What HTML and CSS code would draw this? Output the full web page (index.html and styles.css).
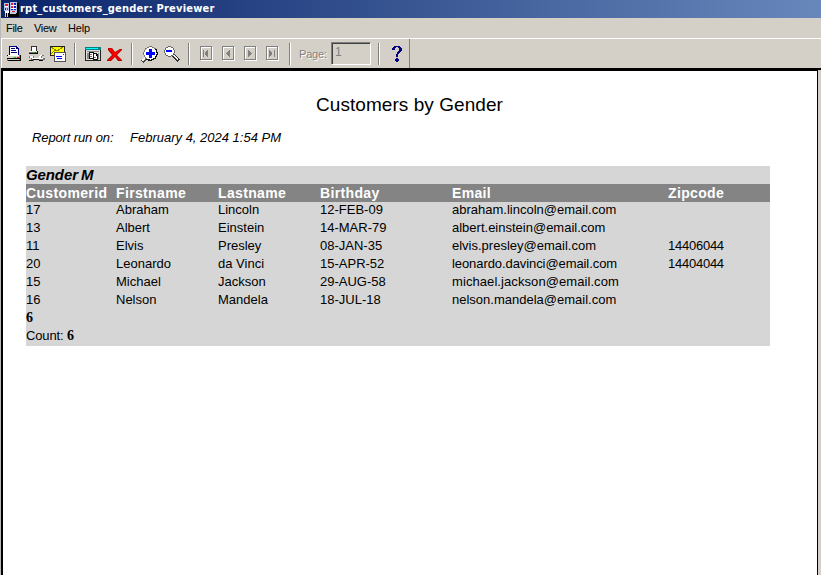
FILE: index.html
```html
<!DOCTYPE html>
<html lang="en">
<head>
<meta charset="utf-8">
<title>rpt_customers_gender: Previewer</title>
<link rel="stylesheet" href="styles.css">
</head>
<body>
<div class="window">
  <header class="titlebar">
    <svg class="app-icon" width="16" height="16" viewBox="0 0 16 16" shape-rendering="crispEdges">
      <path fill="#000" d="M1 1h15v14H3V9H1z"/>
      <path fill="#b8c4e8" d="M1 1h5v8H1zM7 0h7v11H7z"/>
      <path fill="#fff" d="M2 4h3v1H2zM8 3h5v1H8zM8 6h5v1H8zM2 9h4v2H2zM8 9h5v1H8z"/>
      <path fill="#e02030" d="M2 2h3v2H2zM8 1h2v2H8zM8 4h2v2H8zM9 9h3v1H9zM4 6h1v2H4z"/>
      <path fill="#1020c0" d="M11 1h2v2h-2zM11 4h2v2h-2zM8 7h2v1H8zM11 7h2v1h-2zM2 6h1v2H2z"/>
      <path fill="#ccc" d="M2 11h1v4H2zM4 11h1v4H4zM7 11h6v1H7z"/>
    </svg>
    <span class="title">rpt_customers_gender: Previewer</span>
  </header>
  <nav class="menu"><span class="m-file">File</span><span class="m-view">View</span><span class="m-help">Help</span></nav>
  <div class="toolbar-band">
    <div class="toolbar">
      <svg class="i-print" width="16" height="17" viewBox="0 0 16 17" shape-rendering="crispEdges">
        <path fill="#000080" d="M3 1h8v1h1v1h1v7H3z"/><path fill="#fff" d="M4 2h6v2h2v6H4z"/>
        <path fill="#000080" d="M5 3h4v1H5zM5 5h5v1H5zM5 7h6v1H5z"/>
        <path fill="#808080" d="M1 10h14v6H1z"/><path fill="#fff" d="M2 10h11v1H2z"/><path fill="#d4d0c8" d="M1 11h12v2H1z"/>
        <path fill="#000" d="M1 13h13v1H1zM2 15h13v1H2zM14 10h1v6h-1zM1 10h1v1H1z"/><path fill="#d4d0c8" d="M2 14h11v1H2z"/>
        <path fill="#0c0" d="M8 12h2v1H8z"/><path fill="#f00" d="M11 12h2v1h-2z"/>
      </svg>
      <svg class="i-setup" width="17" height="17" viewBox="0 0 17 17" shape-rendering="crispEdges">
        <path fill="#333" d="M3 1h6v5H3z"/><path fill="#fff" d="M4 2h4v4H4z"/>
        <path fill="#777" d="M1 6h9v3H1z"/><path fill="#eee" d="M1 6h8v1H1z"/><path fill="#111" d="M1 8h9v1H1zM9 6h1v3H9z"/>
        <path fill="#0b0" d="M5 7h2v1H5z"/><path fill="#f00" d="M7 7h1v1H7z"/>
        <path fill="#777" d="M1 11h5v2h5v-2h1v-1h4v1h-2v2h3v2h-2v1h-3v-1H6v1H1v-1h2v-2H1z"/>
        <path fill="#fff" d="M2 11h3v2h6v-2h1v-1h2v1h-1v2h2v1H4v-1H2z"/>
        <path fill="#111" d="M1 15h4v1H1zM5 14h6v1H5zM11 15h4v1h-4z"/>
      </svg>
      <svg class="i-mail" width="17" height="17" viewBox="0 0 17 17" shape-rendering="crispEdges">
        <path fill="#222" d="M0 1h15v10H0z"/><path fill="#ff0" d="M1 2h13v8H1z"/>
        <path stroke="#888800" fill="none" d="M1 2l6 4 6-4M1 9l4-4"/>
        <path fill="#555" d="M4 7h12v10H4z"/><path fill="#fff" d="M5 8h10v8H5z"/>
        <path fill="#00f" d="M6 11h6v1H6zM7 13h5v1H7z"/><path fill="#e00" d="M13 9h1v1h-1z"/>
      </svg>
      <i class="sep s1"></i>
      <svg class="i-win" width="16" height="15" viewBox="0 0 16 15" shape-rendering="crispEdges">
        <path fill="#008080" d="M0 0h16v3H0z"/><path fill="#0ff" d="M1 1h12v1H1z"/>
        <path fill="#222" d="M0 3h16v11H0z"/><path fill="#ddd" d="M1 3h14v10H1z"/>
        <path fill="#888" d="M2 4h12v1H2zM2 6h2v6H2zM13 6h1v6h-1z"/>
        <path fill="#111" d="M4 5h5v1h3v1h1v6H8v-1H4z"/><path fill="#fff" d="M5 6h3v5H5zM9 7h2v2h1v3H9z"/>
        <path fill="#777" d="M5 7h2v1H5zM5 9h2v1H5zM9 10h2v1H9z"/>
      </svg>
      <svg class="i-x" width="16" height="14" viewBox="0 0 16 14">
        <path fill="#b00000" d="M1 0h4l3 4 5-3h2v1l-5 5 5 5v1h-4L8 9l-4 4H0v-1l5-5-4-5z"/>
        <path fill="#f00" d="M1.500.5h3L8 5l5-4h1L9 7l4.500 5h-2L8 8l-5 4.500H1L6 7z"/>
      </svg>
      <i class="sep s2"></i>
      <svg class="i-zin" width="18" height="18" viewBox="0 0 18 18" shape-rendering="crispEdges">
        <path d="M1 16l5-5" stroke="#444" stroke-width="3.500"/><path d="M1 15l4-4" stroke="#eee" stroke-width="1.500"/>
        <circle cx="9.500" cy="7.500" r="6.800" fill="#fff" stroke="#777"/><path fill="none" stroke="#111" stroke-width="1.500" d="M14.500 3a6.800 6.800 0 0 1-9 10"/>
        <path fill="#00f" d="M8 3h3v3h3v3h-3v3H8V9H5V6h3z"/>
      </svg>
      <svg class="i-zout" width="16" height="16" viewBox="0 0 16 16" shape-rendering="crispEdges">
        <path d="M9 9l6 6" stroke="#333" stroke-width="3.500"/><path d="M9 8.500l5 5" stroke="#eee" stroke-width="1.500"/>
        <circle cx="5.500" cy="5.500" r="4.800" fill="#fff" stroke="#666"/>
        <path fill="#00f" d="M2 4h6v2H2z"/>
      </svg>
      <i class="sep s3"></i>
      <svg class="nav n1" width="13" height="15" viewBox="0 0 13 15" shape-rendering="crispEdges"><path class="lo" d="M1.500 1.500h11v13h-11z"/><path class="hi" d="M.5.5h11v13H.5z"/><path class="g" d="M3 4h1v7H3zM8 4v7H7v-1H6V9H5V6h1V5h1V4z"/></svg>
      <svg class="nav" width="13" height="15" viewBox="0 0 13 15" shape-rendering="crispEdges"><path class="lo" d="M1.500 1.500h11v13h-11z"/><path class="hi" d="M.5.5h11v13H.5z"/><path class="g" d="M8 4v7H7v-1H6V9H5V8H4V7h1V6h1V5h1V4z"/></svg>
      <svg class="nav" width="13" height="15" viewBox="0 0 13 15" shape-rendering="crispEdges"><path class="lo" d="M1.500 1.500h11v13h-11z"/><path class="hi" d="M.5.5h11v13H.5z"/><path class="g" d="M4 4v7h1v-1h1V9h1V8h1V7H7V6H6V5H5V4z"/></svg>
      <svg class="nav" width="13" height="15" viewBox="0 0 13 15" shape-rendering="crispEdges"><path class="lo" d="M1.500 1.500h11v13h-11z"/><path class="hi" d="M.5.5h11v13H.5z"/><path class="g" d="M8 4h1v7H8zM3 4v7h1v-1h1V9h1V6H5V5H4V4z"/></svg>
      <i class="sep s4"></i>
      <span class="page-label">Page:</span>
      <span class="page-input">1</span>
      <i class="sep s5"></i>
      <svg class="i-help" width="11" height="16" viewBox="0 0 11 16" shape-rendering="crispEdges">
        <path fill="#000080" d="M2 0h6v1h1v1h1v3H9v1H8v1H7v1H6v3H4V8h1V6h1V5h1V2H6V1H4v1H3v2H1V4H0V2h1V1h1zM4 12h2v1h1v2H6v1H4v-1H3v-2h1z"/>
      </svg>
    </div>
  </div>
  <div class="work">
    <main class="page">
      <h1>Customers by Gender</h1>
      <p class="run"><span class="run-label">Report run on:</span><span class="run-date">February 4, 2024 1:54 PM</span></p>
      <section class="report">
        <div class="group"><span class="g1">Gender</span><span class="g2">M</span></div>
        <div class="row head"><span>Customerid</span><span>Firstname</span><span>Lastname</span><span>Birthday</span><span>Email</span><span>Zipcode</span></div>
        <div class="row"><span>17</span><span>Abraham</span><span>Lincoln</span><span>12-FEB-09</span><span>abraham.lincoln@email.com</span><span></span></div>
        <div class="row"><span>13</span><span>Albert</span><span>Einstein</span><span>14-MAR-79</span><span>albert.einstein@email.com</span><span></span></div>
        <div class="row"><span>11</span><span>Elvis</span><span>Presley</span><span>08-JAN-35</span><span>elvis.presley@email.com</span><span class="zip">14406044</span></div>
        <div class="row"><span>20</span><span>Leonardo</span><span>da Vinci</span><span>15-APR-52</span><span class="tight">leonardo.davinci@email.com</span><span class="zip">14404044</span></div>
        <div class="row"><span>15</span><span>Michael</span><span>Jackson</span><span>29-AUG-58</span><span class="wide">michael.jackson@email.com</span><span></span></div>
        <div class="row"><span>16</span><span>Nelson</span><span>Mandela</span><span>18-JUL-18</span><span>nelson.mandela@email.com</span><span></span></div>
        <div class="total"><b>6</b></div>
        <div class="total"><span class="count">Count:</span> <b>6</b></div>
      </section>
    </main>
  </div>
</div>
</body>
</html>
```
FILE: styles.css
```css
* { box-sizing: border-box; }
body { margin: 0; overflow: hidden; background: #d4d0c8; color: #000; font-family: "Liberation Sans", Arial, sans-serif; }
.window { width: 821px; height: 575px; display: flex; flex-direction: column; border-left: 1px solid #b8b8b8; }
.titlebar { height: 18px; flex: none; display: flex; align-items: center; padding-left: 2px; background: linear-gradient(90deg, #0a246a, #6888bc); }
.app-icon { flex: none; margin-top: 1px; }
.title { margin-left: 1px; color: #fff; font: bold 11px/18px "DejaVu Sans Condensed", "DejaVu Sans", sans-serif; letter-spacing: 0.22px; white-space: nowrap; }
.menu { height: 20px; flex: none; display: flex; font-size: 11px; line-height: 20px; padding-left: 5px; }
.menu span { flex: none; }
.m-file { width: 28px; letter-spacing: -0.3px; }
.m-view { width: 34px; letter-spacing: -0.3px; }
.m-help { letter-spacing: -0.2px; }
.toolbar-band { height: 30px; flex: none; border-top: 1px solid #fff; }
.toolbar { width: 409px; height: 29px; display: flex; align-items: flex-start; border-right: 1px solid #808080; border-left: 1px solid #fff; padding-top: 3px; }
.toolbar > * { flex: none; display: block; }
.i-print { margin: 3px 0 0 4px; }
.i-setup { margin: 3px 0 0 6px; }
.i-mail { margin: 3px 0 0 5px; }
.sep { width: 2px; height: 22px; background: linear-gradient(90deg, #808080 50%, #fff 50%); margin-top: 1px; }
.s1 { margin-left: 7px; }
.i-win { margin: 5px 0 0 9px; }
.i-x { margin: 6px 0 0 6px; }
.s2 { margin-left: 8px; }
.i-zin { margin: 4px 0 0 8px; }
.i-zout { margin: 4px 0 0 5px; }
.s3 { margin-left: 8px; }
.nav { margin: 4px 0 0 9px; }
.n1 { margin-left: 10px; }
.lo { fill: none; stroke: #fff; }
.hi { fill: none; stroke: #808080; }
.g { fill: #808080; }
.s4 { margin-left: 10px; }
.page-label { margin: 5px 0 0 8px; width: 32px; font-size: 11px; line-height: 14px; letter-spacing: -0.2px; color: #808080; text-shadow: 1px 1px #fff; }
.page-input { width: 40px; height: 23px; border: 1px solid; border-color: #808080 #fff #fff #808080; box-shadow: inset 1px 1px #404040; padding: 2px 0 0 3px; font-size: 12px; line-height: 14px; color: #808080; }
.s5 { margin-left: 7px; }
.i-help { margin: 4px 0 0 12px; }
.work { flex: 1; border-top: 2px solid #000; border-left: 2px solid #000; display: flex; }
.page { width: 815px; background: #fff; border-top: 1px solid #000; border-right: 1px solid #000; padding: 23px 0 0 23px; }
h1 { margin: 0 0 0 290px; font-size: 19px; font-weight: normal; line-height: 22px; letter-spacing: 0.06px; white-space: nowrap; }
.run { display: flex; margin: 13px 0 0 6px; font-size: 13px; line-height: 18px; font-style: italic; white-space: nowrap; }
.run-label { width: 98px; letter-spacing: -0.12px; }
.report { width: 744px; height: 180px; margin-top: 19px; background: #d6d6d6; font-size: 13px; white-space: nowrap; }
.group { height: 18px; font-weight: bold; font-style: italic; font-size: 15px; line-height: 18px; letter-spacing: -0.1px; display: flex; }
.g1 { width: 55px; }
.row { display: grid; grid-template-columns: 90px 102px 102px 132px 216px 102px; height: 18px; line-height: 16px; }
.row.head { background: #848484; color: #fff; font-weight: bold; font-size: 14px; line-height: 18px; letter-spacing: 0.35px; }
.zip { letter-spacing: -0.25px; }
.tight { letter-spacing: -0.08px; }
.wide { letter-spacing: 0.08px; }
.count { letter-spacing: -0.15px; }
.total { height: 18px; line-height: 16px; }
.total b { font-family: "Liberation Serif", serif; font-size: 14px; }
```
